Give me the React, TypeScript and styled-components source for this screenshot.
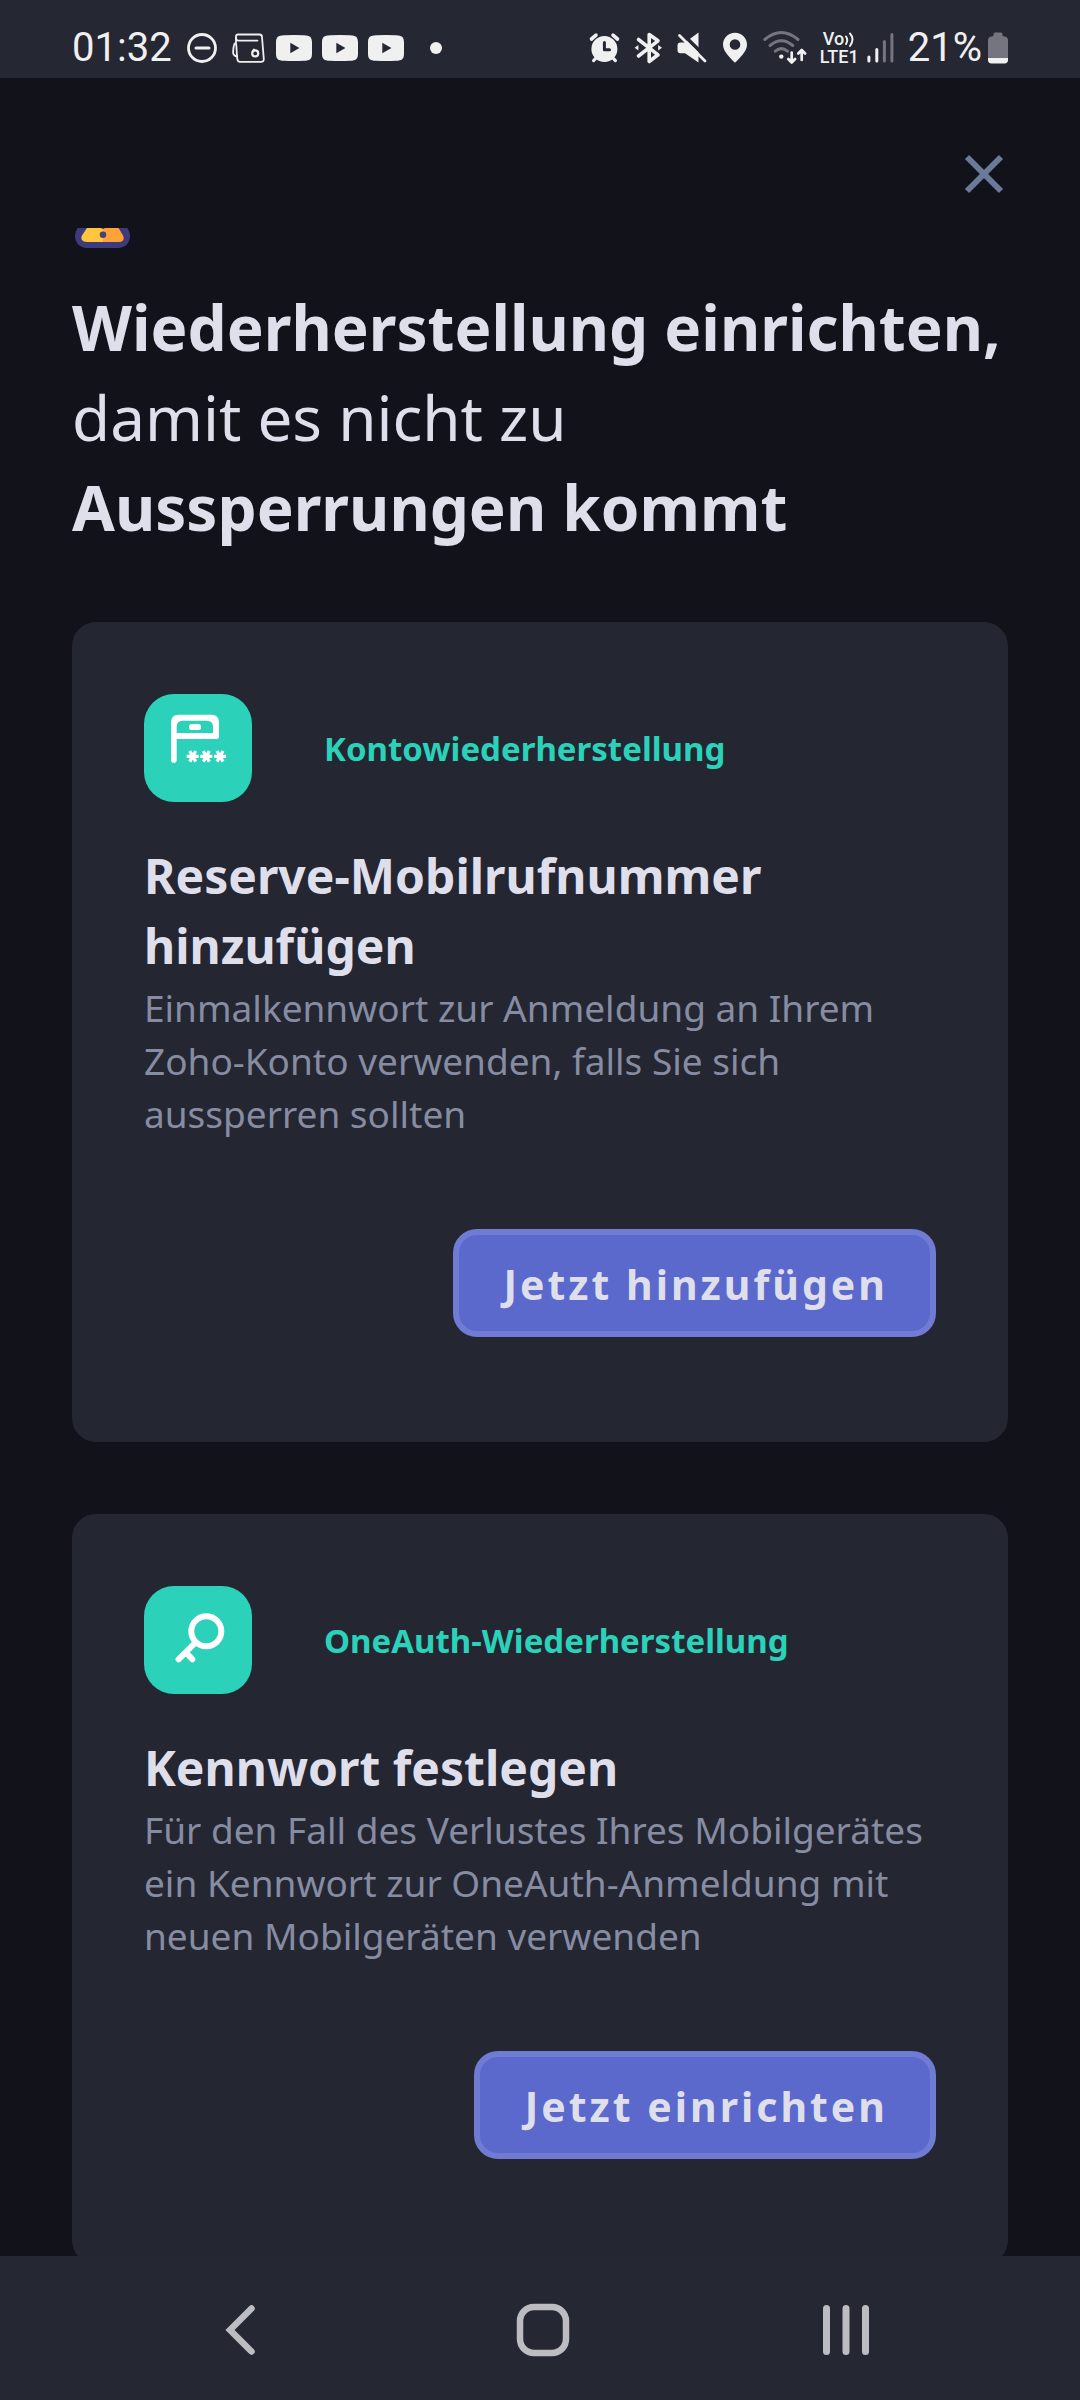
import React, { type ReactNode } from "react";
import styled, { createGlobalStyle } from "styled-components";

const color = {
  page: "#11121a",
  bar: "#252733",
  card: "#242632",
  heading: "#dfdfec",
  muted: "#868ca1",
  teal: "#2bd1b9",
  primary: "#5b69cc",
  primaryEdge: "#707bd3",
  close: "#6b7a99",
  status: "#f0f0f0",
  statusDim: "#74757e",
  nav: "#bdbdc1",
};

const GlobalStyle = createGlobalStyle`
  *, *::before, *::after { box-sizing: border-box; }
  body { margin: 0; background: ${color.page}; }
  svg { display: block; flex: none; }
  button { margin: 0; padding: 0; border: 0; background: none; cursor: pointer; }
`;

const Screen = styled.div`
  display: flex;
  flex-direction: column;
  height: 100vh;
  background: ${color.page};
  color: ${color.heading};
  font-family: "Noto Sans", "Open Sans", sans-serif;
`;

const StatusBar = styled.div`
  display: flex;
  flex: none;
  align-items: center;
  justify-content: space-between;
  height: 78px;
  padding: 18px 72px 0;
  background: ${color.bar};
  color: ${color.status};
  font-family: Roboto, sans-serif;
  font-size: 40px;
  line-height: 48px;
`;

const StatusGroup = styled.div<{ $gap: number }>`
  display: flex;
  align-items: center;
  gap: ${(p) => p.$gap}px;
`;

const Network = styled.div`
  width: 41px;
  font-size: 18px;
  font-weight: 500;
  line-height: 18px;
`;

const NetworkLine = styled.div`
  display: flex;
  align-items: center;
  justify-content: flex-start;
  padding-left: 3px;

  & + & {
    padding-left: 0;
  }
`;

const Header = styled.header`
  display: flex;
  flex: none;
  justify-content: flex-end;
  padding: 72px 72px 30px;
`;

const CloseButton = styled.button`
  display: grid;
  place-items: center;
  width: 48px;
  height: 48px;
  color: ${color.close};
`;

const Content = styled.main`
  flex: 1;
  min-height: 0;
  overflow: hidden;
  padding: 0 72px;
`;

const Title = styled.h1`
  margin: 34px 0 70px;
  font-size: 62px;
  font-weight: 400;
  line-height: 90px;

  strong {
    font-weight: 700;
  }
`;

const CardList = styled.div`
  display: flex;
  flex-direction: column;
  gap: 72px;
`;

const Card = styled.section`
  display: flex;
  flex-direction: column;
  padding: 72px 72px 105px;
  border-radius: 24px;
  background: ${color.card};
`;

const CardHead = styled.div`
  display: flex;
  align-items: center;
  gap: 72px;
  margin-bottom: 39px;
`;

const Tile = styled.div`
  flex: none;
  width: 108px;
  height: 108px;
  border-radius: 30px;
  background: ${color.teal};
`;

const Category = styled.span`
  padding-top: 2px;
  color: ${color.teal};
  font-size: 33px;
  font-weight: 700;
  line-height: 48px;
`;

const CardTitle = styled.h2`
  margin: 0;
  font-size: 48px;
  font-weight: 700;
  line-height: 70px;
`;

const CardText = styled.p`
  margin: 0 0 89px;
  color: ${color.muted};
  font-size: 37px;
  line-height: 53px;
`;

const Action = styled.button`
  && {
    align-self: flex-end;
    height: 108px;
    padding: 2px 42px 0 45px;
    border: 6px solid ${color.primaryEdge};
    border-radius: 24px;
    background: ${color.primary};
    color: ${color.heading};
    font-family: inherit;
    font-size: 41px;
    font-weight: 700;
    line-height: 60px;
    letter-spacing: 3px;
  }
`;

const NavBar = styled.nav`
  display: grid;
  flex: none;
  grid-template-columns: repeat(3, 1fr);
  height: 144px;
  padding: 4px 82px 0 88px;
  background: ${color.bar};
`;

const NavButton = styled.button`
  display: grid;
  place-items: center;
  color: ${color.nav};
`;

const StatusIcon = ({ width, children }: { width: number; children: ReactNode }) => (
  <svg width={width} height="40" viewBox={`0 0 ${width} 40`} fill="none" stroke="currentColor" strokeLinecap="round" strokeLinejoin="round" aria-hidden="true">
    {children}
  </svg>
);

const DoNotDisturb = () => (
  <StatusIcon width={40}>
    <circle cx="20" cy="20" r="13.5" strokeWidth="2.8" />
    <path d="M14 20H27" strokeWidth="3" />
  </StatusIcon>
);

const Wallet = () => (
  <StatusIcon width={34}>
    <g strokeWidth="1.8">
      <path d="M4 15V8.5Q4 6.5 6 6.5H27.5Q29.8 6.5 30 9L31.8 31Q32 33.8 29 33.8H8Q5.6 33.8 5.3 31L5 28" />
      <path d="M4 10Q4 12.6 6.5 12.6H25.5" />
      <path d="M2.6 15.5Q4 15 4.3 17L5 28.5Q2 28 1.2 25.5Q.8 20 2.6 15.5Z" />
      <circle cx="23.2" cy="25.4" r="3" strokeWidth="2.2" />
      <path d="M21.5 22.4L22 21.6" strokeWidth="2" />
    </g>
  </StatusIcon>
);

const Video = () => (
  <StatusIcon width={36}>
    <path d="M8 7.2Q18 6.6 28 7.2C34 7.4 35.8 9 36 14Q36.2 20 36 26C35.8 31 34 32.6 28 32.8Q18 33.4 8 32.8C2 32.6 .2 31 0 26Q-.2 20 0 14C.2 9 2 7.4 8 7.2Z" fill="currentColor" stroke="none" />
    <path d="M14.3 14.7V25.2L23.4 20Z" fill={color.bar} stroke="none" />
  </StatusIcon>
);

const MoreDot = () => (
  <StatusIcon width={28}>
    <circle cx="22" cy="20" r="6" fill="currentColor" stroke="none" />
  </StatusIcon>
);

const Alarm = () => (
  <StatusIcon width={37}>
    <circle cx="16.4" cy="21" r="13" fill="currentColor" stroke="none" />
    <path d="M3.5 11L8 7.2M25 7.2L29.5 11" strokeWidth="3.6" />
    <path d="M5.6 32.6L9 29M27.4 32.6L24 29" strokeWidth="3.2" />
    <path d="M16.4 14.5V21.7H21.5" stroke={color.bar} strokeWidth="3" />
  </StatusIcon>
);

const Bluetooth = () => (
  <StatusIcon width={38}>
    <path d="M7.5 11.5L27 26.8L18.2 33.5V6.5L27 12.8L7.5 28" strokeWidth="3.6" />
    <path d="M3.6 19.7L7.4 17V22.4ZM31 19.7L27.2 17V22.4Z" fill="currentColor" stroke="none" />
  </StatusIcon>
);

const Muted = () => (
  <StatusIcon width={40}>
    <path d="M5.5 14.5H10L23.5 4.5V34.5L10 25.3H5.5Q2.5 25.3 2.5 22.3V17.5Q2.5 14.5 5.5 14.5Z" fill="currentColor" stroke="none" />
    <path d="M7 5.5L33 31" stroke={color.bar} strokeWidth="3.6" />
    <path d="M4.5 7.5L30 33" strokeWidth="2.8" />
  </StatusIcon>
);

const Pin = () => (
  <StatusIcon width={36}>
    <path fillRule="evenodd" d="M14 4.8C20.8 4.8 26 10 26 16.5C26 23.5 19.5 29 14 34.8C8.5 29 2 23.5 2 16.5C2 10 7.2 4.8 14 4.8ZM14 11.2A5.3 5.3 0 1 0 14 21.8A5.3 5.3 0 1 0 14 11.2Z" fill="currentColor" stroke="none" />
  </StatusIcon>
);

const Wifi = () => (
  <StatusIcon width={51}>
    <g stroke={color.statusDim} strokeWidth="3">
      <path d="M1.8 11.5Q18.4-2.5 35 11.5" />
      <path d="M7 17.5Q18.4 8 29.8 17.5" />
      <path d="M12.3 23.2Q18.4 18 24.5 23.2" />
    </g>
    <circle cx="18.3" cy="28.6" r="2.2" fill="currentColor" stroke="none" />
    <path d="M28.7 24.5V34M25.3 31L28.7 34.5L32.1 31M38.7 32V22.5M35.3 25.5L38.7 22L42.1 25.5" strokeWidth="2.7" />
  </StatusIcon>
);

const Waves = () => (
  <svg width="11" height="18" viewBox="0 0 11 18" fill="none" stroke="currentColor" strokeWidth="2" strokeLinecap="round" aria-hidden="true">
    <path d="M2 6.5Q4.5 10 2 14M6 3.5Q11 9 6 16" />
  </svg>
);

const Signal = () => (
  <StatusIcon width={35}>
    <path d="M1.9 29V33M9.8 21.5V33" strokeWidth="3" />
    <path d="M17.4 13.5V33M24.9 6.5V33" stroke={color.statusDim} strokeWidth="3" />
  </StatusIcon>
);

const Battery = () => (
  <StatusIcon width={20}>
    <path d="M5.5 8V6Q5.5 4.4 7.1 4.4H12.9Q14.5 4.4 14.5 6V8Q20 8.5 20 12V30.3H0V12Q0 8.5 5.5 8Z" fill={color.statusDim} stroke="none" />
    <path d="M0 30H20V32Q20 35.4 16.5 35.4H3.5Q0 35.4 0 32Z" fill="currentColor" stroke="none" />
  </StatusIcon>
);

const LockBase = () => (
  <svg width="60" height="20" viewBox="0 0 60 20" aria-hidden="true">
    <path d="M5.5 0Q3 4 3 8C3 15 8 20 15 20H46C53 20 58 15 58 8Q58 4 55.5 0Z" fill="#3e3b7c" />
    <path d="M15 0H31V14H15C10 14 8.3 10.5 10 7.5Z" fill="#ffc53c" />
    <path d="M31 0H46.5L51 7.5C52.5 10.5 51.5 14 47 14H31Z" fill="#ffa338" />
    <circle cx="31" cy="6.8" r="3.3" fill="#47407a" />
    <path d="M29 0H33L31 1.2Z" fill="#47407a" />
  </svg>
);

const asteriskCentres = [48.7, 62.3, 76];

const PhoneCode = () => (
  <svg width="108" height="108" viewBox="0 0 108 108" fill="#fff" aria-hidden="true">
    <path
      fillRule="evenodd"
      d="M34.5 20.7H67.5Q75 20.7 75 28.5V42.5Q75 45 72.5 45H32.7V66A2.85 2.85 0 0 1 27 66V28.5Q27 20.7 34.5 20.7ZM38.5 26.7Q32.7 26.7 32.7 33V38.9H69V33Q69 26.7 63 26.7Z"
    />
    <rect x="45" y="30" width="12" height="6" rx="2.5" />
    {asteriskCentres.map((x) => (
      <path key={x} d={`M${x - 6} 62.3H${x + 6}M${x - 3} 57L${x + 3} 67.6M${x + 3} 57L${x - 3} 67.6`} stroke="#fff" strokeWidth="3.2" />
    ))}
  </svg>
);

const Key = () => (
  <svg width="108" height="108" viewBox="0 0 108 108" fill="none" stroke="#fff" strokeWidth="6" strokeLinecap="round" aria-hidden="true">
    <circle cx="62.3" cy="45.3" r="15" />
    <path d="M51 57L34.6 73.4M42 66.5L48.3 73.2" />
  </svg>
);

interface RecoveryOption {
  id: string;
  icon: ReactNode;
  category: string;
  title: string;
  text: string;
  action: string;
}

const options: RecoveryOption[] = [
  {
    id: "phone",
    icon: <PhoneCode />,
    category: "Kontowiederherstellung",
    title: "Reserve-Mobilrufnummer hinzufügen",
    text: "Einmalkennwort zur Anmeldung an Ihrem Zoho-Konto verwenden, falls Sie sich aussperren sollten",
    action: "Jetzt hinzufügen",
  },
  {
    id: "passphrase",
    icon: <Key />,
    category: "OneAuth-Wiederherstellung",
    title: "Kennwort festlegen",
    text: "Für den Fall des Verlustes Ihres Mobilgerätes ein Kennwort zur OneAuth-Anmeldung mit neuen Mobilgeräten verwenden",
    action: "Jetzt einrichten",
  },
];

const RecoveryCard = ({ option }: { option: RecoveryOption }) => (
  <Card aria-labelledby={option.id}>
    <CardHead>
      <Tile>{option.icon}</Tile>
      <Category>{option.category}</Category>
    </CardHead>
    <CardTitle id={option.id}>{option.title}</CardTitle>
    <CardText>{option.text}</CardText>
    <Action type="button">{option.action}</Action>
  </Card>
);

export default function App() {
  return (
    <Screen>
      <GlobalStyle />
      <StatusBar>
        <StatusGroup $gap={10}>
          <span>01:32</span>
          <DoNotDisturb />
          <Wallet />
          <Video />
          <Video />
          <Video />
          <MoreDot />
        </StatusGroup>
        <StatusGroup $gap={6}>
          <Alarm />
          <Bluetooth />
          <Muted />
          <Pin />
          <Wifi />
          <Network>
            <NetworkLine>
              Vo
              <Waves />
            </NetworkLine>
            <NetworkLine>LTE1</NetworkLine>
          </Network>
          <Signal />
          <span>21%</span>
          <Battery />
        </StatusGroup>
      </StatusBar>
      <Header>
        <CloseButton type="button" aria-label="Schließen">
          <svg width="40" height="40" viewBox="0 0 40 40" fill="none" stroke="currentColor" strokeWidth="6" aria-hidden="true">
            <path d="M3 3L37 37M37 3L3 37" />
          </svg>
        </CloseButton>
      </Header>
      <Content>
        <LockBase />
        <Title>
          <strong>Wiederherstellung einrichten,</strong> damit es nicht zu <strong>Aussperrungen kommt</strong>
        </Title>
        <CardList>
          {options.map((option) => (
            <RecoveryCard key={option.id} option={option} />
          ))}
        </CardList>
      </Content>
      <NavBar>
        <NavButton type="button" aria-label="Zurück">
          <svg width="54" height="54" viewBox="0 0 54 54" fill="none" stroke="currentColor" strokeWidth="6.5" strokeLinecap="round" aria-hidden="true">
            <path d="M38.5 5.5L17 27L38.5 48.5" />
          </svg>
        </NavButton>
        <NavButton type="button" aria-label="Startbildschirm">
          <svg width="54" height="54" viewBox="0 0 54 54" fill="none" stroke="currentColor" strokeWidth="6.5" aria-hidden="true">
            <rect x="4" y="4" width="46" height="46" rx="14" />
          </svg>
        </NavButton>
        <NavButton type="button" aria-label="Letzte Apps">
          <svg width="54" height="54" viewBox="0 0 54 54" fill="none" stroke="currentColor" strokeWidth="7" strokeLinecap="round" aria-hidden="true">
            <path d="M7.5 5.5V48.5M27 5.5V48.5M46.5 5.5V48.5" />
          </svg>
        </NavButton>
      </NavBar>
    </Screen>
  );
}
